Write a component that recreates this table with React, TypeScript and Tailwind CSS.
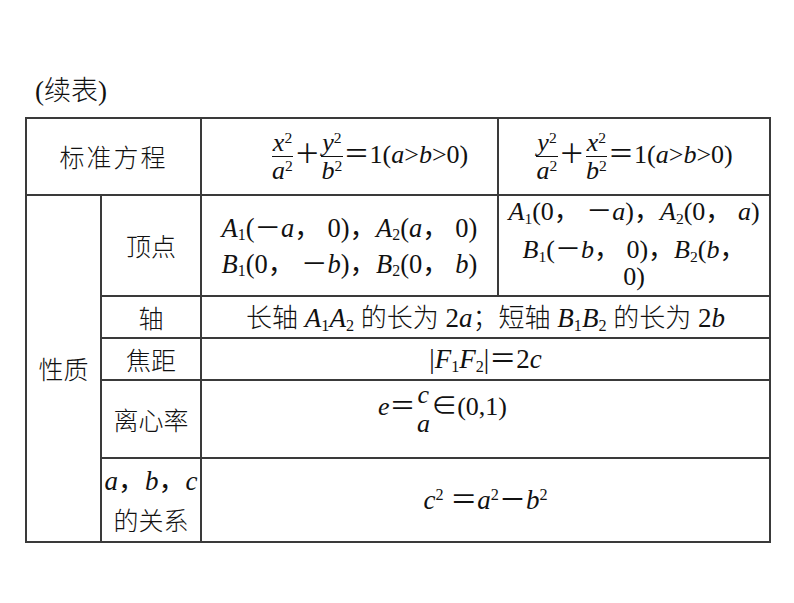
import type { ReactNode } from 'react';

// 椭圆标准方程与性质（续表）

function Frac({ num, den, bar = true }: { num: ReactNode; den: ReactNode; bar?: boolean }) {
  return (
    <span className="mx-[1px] inline-flex flex-col items-center align-middle">
      <span className="px-[1px] leading-[27px]">{num}</span>
      <span className={bar ? 'h-[1.5px] self-stretch bg-[#111]' : 'h-[1.5px]'} />
      <span className="leading-[27px]">{den}</span>
    </span>
  );
}

function V({ children }: { children: ReactNode }) {
  return <i className="italic">{children}</i>;
}

function S({ children }: { children: ReactNode }) {
  return <sub className="text-[0.6em]">{children}</sub>;
}

function P({ children }: { children: ReactNode }) {
  return <sup className="text-[0.6em]">{children}</sup>;
}

const zh = "font-['Noto_Sans_CJK_SC',sans-serif] font-light text-[25px]";
const zh26 = "font-['Noto_Sans_CJK_SC',sans-serif] font-light text-[26px]";

export default function App() {
  const td = 'border-2 border-[#3a3a3a] p-0 text-center align-middle';
  return (
    <div className="min-h-[603px] w-[794px] bg-white pt-[73px] font-['Liberation_Serif','Noto_Sans_CJK_SC',serif] text-[27px] text-[#111]">
      <div className="mb-[10px] ml-[35px] text-[27px] leading-[32px]">
        (<span className="font-['Noto_Sans_CJK_SC',sans-serif] font-light">续表</span>)
      </div>
      <table className="ml-[25px] w-[744px] table-fixed border-collapse">
        <colgroup>
          <col className="w-[75px]" />
          <col className="w-[100px]" />
          <col className="w-[297px]" />
          <col className="w-[272px]" />
        </colgroup>
        <tbody>
          <tr className="h-[77px]">
            <td colSpan={2} className={`${td} ${zh} tracking-[2px]`}>
              标准方程
            </td>
            <td className={`${td} pl-[40px] text-[26px] leading-[30px]`}>
              <Frac num={<><V>x</V><P>2</P></>} den={<><V>a</V><P>2</P></>} />
              ＋
              <Frac num={<><V>y</V><P>2</P></>} den={<><V>b</V><P>2</P></>} />
              ＝1(<V>a</V>&gt;<V>b</V>&gt;0)
            </td>
            <td className={`${td} text-[26px] leading-[30px]`}>
              <Frac num={<><V>y</V><P>2</P></>} den={<><V>a</V><P>2</P></>} />
              ＋
              <Frac num={<><V>x</V><P>2</P></>} den={<><V>b</V><P>2</P></>} />
              ＝1(<V>a</V>&gt;<V>b</V>&gt;0)
            </td>
          </tr>
          <tr className="h-[101px]">
            <td rowSpan={5} className={`${td} ${zh}`}>
              性质
            </td>
            <td className={`${td} ${zh}`}>顶点</td>
            <td className={`${td} text-[26.5px] leading-[36px]`}>
              <div>
                <V>A</V><S>1</S>(－<V>a</V>， 0)，<V>A</V><S>2</S>(<V>a</V>， 0)
              </div>
              <div>
                <V>B</V><S>1</S>(0， －<V>b</V>)，<V>B</V><S>2</S>(0， <V>b</V>)
              </div>
            </td>
            <td className={`${td} align-top text-[26px]`}>
              <div className="leading-[32px]">
                <V>A</V><S>1</S>(0， －<V>a</V>)，<V>A</V><S>2</S>(0， <V>a</V>)
              </div>
              <div className="mt-[8px] leading-[27px]">
                <V>B</V><S>1</S>(－<V>b</V>， 0)，<V>B</V><S>2</S>(<V>b</V>，
                <br />
                0)
              </div>
            </td>
          </tr>
          <tr className="h-[42px]">
            <td className={`${td} ${zh} leading-[30px]`}>轴</td>
            <td colSpan={2} className={`${td} leading-[30px]`}>
              <span className={zh26}>长轴</span> <V>A</V><S>1</S><V>A</V><S>2</S>{' '}
              <span className={zh26}>的长为</span> 2<V>a</V>
              <span className={zh26}>；短轴</span> <V>B</V><S>1</S><V>B</V><S>2</S>{' '}
              <span className={zh26}>的长为</span> 2<V>b</V>
            </td>
          </tr>
          <tr className="h-[42px]">
            <td className={`${td} ${zh} leading-[30px]`}>焦距</td>
            <td colSpan={2} className={`${td} leading-[30px]`}>
              |<V>F</V><S>1</S><V>F</V><S>2</S>|＝2<V>c</V>
            </td>
          </tr>
          <tr className="h-[76px]">
            <td className={`${td} ${zh} leading-[30px]`}>离心率</td>
            <td colSpan={2} className={`${td} pb-[20px] pr-[86px] text-[26px] leading-[30px]`}>
              <V>e</V>＝<Frac bar={false} num={<V>c</V>} den={<V>a</V>} />∈(0,1)
            </td>
          </tr>
          <tr className="h-[84px]">
            <td className={`${td} leading-[38px]`}>
              <div>
                <V>a</V>，<V>b</V>，<V>c</V>
              </div>
              <div className={zh}>的关系</div>
            </td>
            <td colSpan={2} className={`${td} leading-[30px]`}>
              <V>c</V><P>2</P> ＝<V>a</V><P>2</P>－<V>b</V><P>2</P>
            </td>
          </tr>
        </tbody>
      </table>
    </div>
  );
}
